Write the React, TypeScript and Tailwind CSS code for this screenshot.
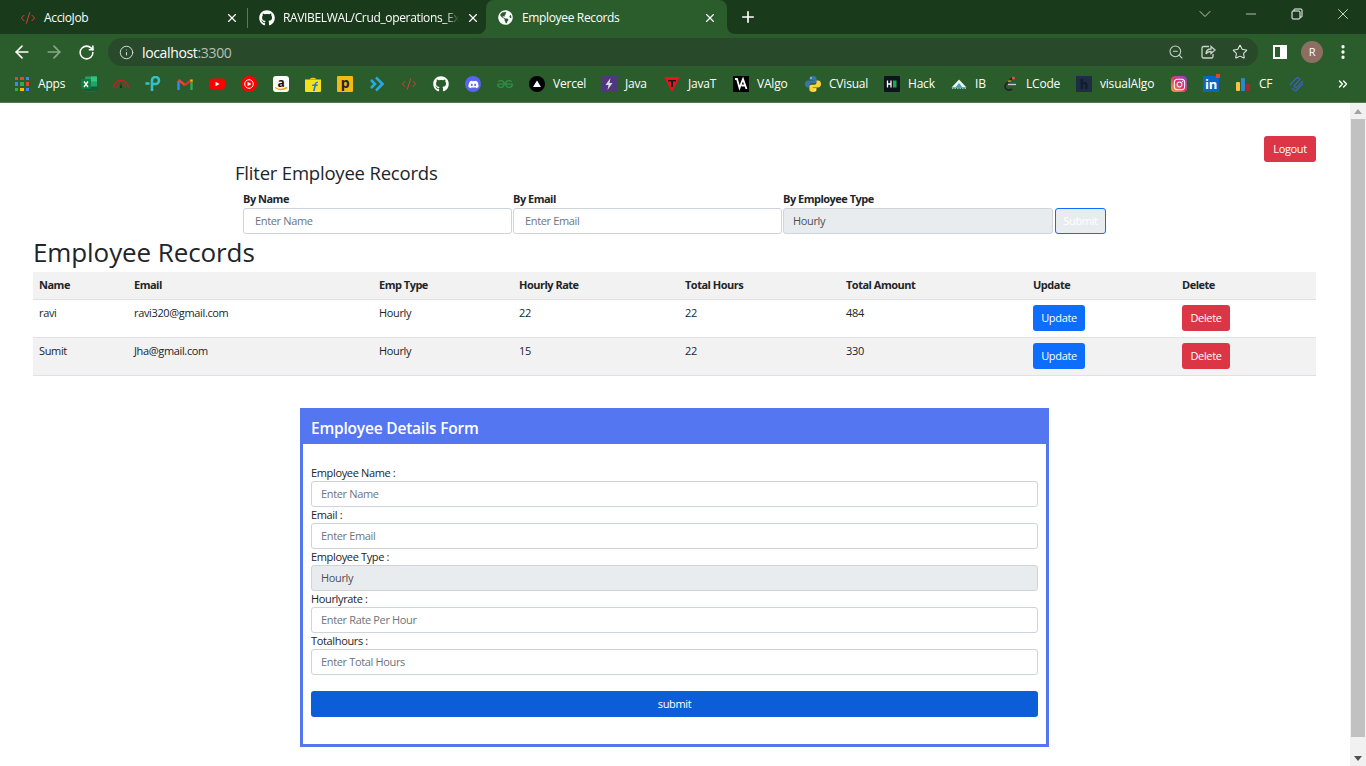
import React from "react";
import {
  ArrowLeft,
  ArrowRight,
  ChevronDown,
  ChevronsRight,
  CodeXml,
  EllipsisVertical,
  Info,
  Minus,
  Plus,
  RotateCw,
  Star,
  X,
  ZoomOut,
} from "lucide-react";
import { FaGithub, FaDiscord, FaGlobeAmericas, FaInstagram } from "react-icons/fa";
import { SiGeeksforgeeks } from "react-icons/si";

const Excel = () => (
  <svg viewBox="0 0 16 16" className="w-4 h-4">
    <rect x="4" y="0.500" width="12" height="15" rx="1" fill="#21a366" />
    <rect x="10" y="0.500" width="6" height="5" fill="#33c481" />
    <rect x="4" y="10.500" width="12" height="5" fill="#185c37" />
    <rect x="0" y="3" width="10" height="10" rx="1" fill="#107c41" />
    <path d="M3 5.500l4 5.500M7 5.500l-4 5.500" stroke="#fff" strokeWidth="1.300" />
  </svg>
);

const Gauge = () => (
  <svg viewBox="0 0 16 16" className="w-4 h-4" fill="none">
    <path d="M0.500 12a7.500 7.500 0 0 1 15 0" stroke="#c81e24" strokeWidth="1.300" />
    <path d="M3.500 12a4.500 4.500 0 0 1 9 0" stroke="#c81e24" strokeWidth="1.100" />
    <path d="M8 6l.9 6H7.100z" fill="#222" />
  </svg>
);

const TpLink = () => (
  <svg viewBox="0 0 16 16" className="w-4 h-4" fill="none" stroke="#35c0c8" strokeWidth="2.600">
    <path d="M7 15V4.500a3.500 3.500 0 1 1 3.500 3.500H8" />
    <path d="M0.500 7.500h4" />
  </svg>
);

const Gmail = () => (
  <svg viewBox="0 0 16 16" className="w-4 h-4" fill="none" strokeWidth="2.400">
    <path d="M1.500 14V5" stroke="#4285f4" />
    <path d="M14.500 14V5" stroke="#34a853" />
    <path d="M1.500 4l6.500 5" stroke="#ea4335" />
    <path d="M14.500 4L8 9" stroke="#d9342b" />
    <path d="M14.500 3.500v2" stroke="#fbbc05" />
  </svg>
);

const Youtube = () => (
  <svg viewBox="0 0 16 16" className="w-4 h-4">
    <rect y="2.500" width="16" height="11" rx="3" fill="#f00" />
    <path d="M6.500 5.700L10.500 8l-4 2.300z" fill="#fff" />
  </svg>
);

const YtMusic = () => (
  <svg viewBox="0 0 16 16" className="w-4 h-4">
    <circle cx="8" cy="8" r="8" fill="#f00" />
    <circle cx="8" cy="8" r="4.300" fill="none" stroke="#fff" strokeWidth="1" />
    <path d="M6.500 5.800L10.500 8l-4 2.200z" fill="#fff" />
  </svg>
);

const AmazonIcon = () => (
  <span className="relative w-4 h-4 bg-white rounded-[3px] flex justify-center text-[#111] text-[12px] font-bold leading-[13px]">
    a
    <svg viewBox="0 0 16 16" className="absolute inset-0 w-4 h-4" fill="none">
      <path d="M2 11.500c3.500 2.500 8 2.500 12 0" stroke="#f90" strokeWidth="1.500" />
    </svg>
  </span>
);

const Flipkart = () => (
  <svg viewBox="0 0 16 16" className="w-4 h-4">
    <path d="M0 3.500h16V15a1 1 0 0 1-1 1H1a1 1 0 0 1-1-1z" fill="#f7e21a" />
    <path d="M4.500 3.500C5 1 11 1 11.500 3.500z" fill="#f2c811" />
    <path d="M8 15l1.200-5H7l.4-1.500h2.100c.4-2 1.500-3 3.500-2.700L12.800 7c-1-.1-1.500.3-1.700 1.500h1.700L12.500 10h-1.700l-1 5z" fill="#2874f0" />
  </svg>
);

const PIcon = () => (
  <span className="w-4 h-4 bg-[#f5b914] rounded-[1px] flex items-center justify-center text-[#222] text-[14px] font-bold leading-none pb-[2px]">
    p
  </span>
);

const BlueArrow = () => (
  <svg viewBox="0 0 16 16" className="w-4 h-4" fill="none" stroke="#29a9e1" strokeWidth="2.600">
    <path d="M2 4l4 4-4 4" />
    <path d="M7 1.500l6.500 6.500-6.500 6.500" />
  </svg>
);

const Vercel = () => (
  <svg viewBox="0 0 16 16" className="w-4 h-4">
    <circle cx="8" cy="8" r="8" fill="#000" />
    <path d="M8 4.500l4 6.500H4z" fill="#fff" />
  </svg>
);

const JavaIcon = () => (
  <svg viewBox="0 0 16 16" className="w-4 h-4">
    <rect width="16" height="16" fill="#51377f" />
    <path d="M9.500 2L4.500 9h3L6.500 14l5-7h-3z" fill="#ddd" />
  </svg>
);

const TIcon = () => (
  <svg viewBox="0 0 16 16" className="w-4 h-4">
    <path d="M0 1h16L8 16z" fill="#e8141c" />
    <path d="M4 4h8v1.600H9V11H7V5.600H4z" fill="#1a1a1a" />
  </svg>
);

const VaIcon = () => (
  <svg viewBox="0 0 16 16" className="w-4 h-4">
    <rect width="16" height="16" fill="#000" />
    <path d="M2 3h2l2.500 9L10 3l3.500 10M8.500 9.500h4" stroke="#fff" strokeWidth="1.800" fill="none" />
  </svg>
);

const Python = () => (
  <svg viewBox="0 0 16 16" className="w-4 h-4">
    <path d="M8 0C5 0 4.500 1.200 4.500 2.500V4H8.200v.600H3C1.200 4.600 0 5.800 0 8s1.200 3.500 2.800 3.500H4.500V9.600C4.500 8.300 5.500 7.300 6.800 7.300h3c1 0 1.800-.9 1.800-1.900V2.500C11.600 1 10.300 0 8 0z" fill="#3776ab" />
    <path d="M8 16c3 0 3.500-1.200 3.500-2.500V12H7.800v-.600H13c1.800 0 3-1.200 3-3.400s-1.200-3.500-2.800-3.500h-1.700v1.900c0 1.300-1 2.300-2.300 2.300h-3c-1 0-1.800.9-1.800 1.900v2.900C4.400 15 5.700 16 8 16z" fill="#ffd43b" />
    <circle cx="6" cy="2" r=".7" fill="#fff" />
    <circle cx="10" cy="14" r=".7" fill="#fff" />
  </svg>
);

const HackIcon = () => (
  <svg viewBox="0 0 16 16" className="w-4 h-4">
    <rect width="16" height="16" rx="1" fill="#0e141e" />
    <path d="M3.500 4.500v7M7 4.500v7M3.500 8H7" stroke="#fff" strokeWidth="1.300" />
    <rect x="9" y="4.500" width="3.500" height="7" fill="#1ba94c" />
  </svg>
);

const IbIcon = () => (
  <svg viewBox="0 0 16 16" className="w-4 h-4">
    <path d="M8 3.500l7.500 8H.5z" fill="#eef4f4" />
    <path d="M8 7l3.500 4.500h-7z" fill="#3f9fb5" />
    <path d="M1 12.500h14" stroke="#79c4d4" strokeWidth="1" strokeDasharray="1.500 1" />
  </svg>
);

const LeetIcon = () => (
  <svg viewBox="0 0 16 16" className="w-4 h-4" fill="none">
    <path d="M10 2L4 8c-1.500 1.600-1 3.600 0 4.700 1.600 1.700 4 1.700 6 .3" stroke="#222" strokeWidth="1.600" />
    <path d="M6 8.500h8" stroke="#ccc" strokeWidth="1.300" />
    <path d="M9 5.500c-1-.8-2-.8-3 0" stroke="#f89f1b" strokeWidth="1.300" />
    <circle cx="11.500" cy="2" r="1.500" fill="#e8523f" />
  </svg>
);

const HIcon = () => (
  <span className="w-4 h-4 bg-[#1e2d44] rounded-[1px] flex items-center justify-center text-[#0f1a2c] text-[13px] font-bold leading-none">
    h
  </span>
);

const Insta = () => (
  <span className="w-4 h-4 rounded-[4px] bg-gradient-to-tr from-[#f9a02e] via-[#e1306c] to-[#7b3fc4] flex items-center justify-center">
    <FaInstagram className="w-[13px] h-[13px] text-white" />
  </span>
);

const Linked = () => (
  <span className="relative w-4 h-4 bg-[#0a66c2] flex items-center justify-center text-white text-[13px] font-bold leading-none">
    in
    <span className="absolute -right-[1px] -top-[2px] w-[4px] h-[4px] bg-[#e2403a]" />
  </span>
);

const CfIcon = () => (
  <svg viewBox="0 0 16 16" className="w-4 h-4">
    <rect x="1" y="6" width="4" height="9" rx="1" fill="#f4c542" />
    <rect x="6" y="2" width="4" height="13" rx="1" fill="#2d88c9" />
    <rect x="11" y="8" width="4" height="7" rx="1" fill="#b8202a" />
  </svg>
);

const Wave = () => (
  <svg viewBox="0 0 16 16" className="w-4 h-4" fill="none" stroke="#3c62ad" strokeWidth="1.300">
    <path d="M1 9l6-6.500c1-1 2-1 3 0l1 1-6 6.500 2 2 7-7" />
    <path d="M3 12l2 2c1 1 2 1 3 0l6-6.500" />
  </svg>
);

const AppsGrid = () => {
  const dots = ["#ea4335", "#ea4335", "#4285f4", "#4285f4", "#34a853", "#ea4335", "#34a853", "#fbbc05", "#4285f4"];
  return (
    <span className="w-4 h-4 grid grid-cols-3 gap-[2px] p-[1px]">
      {dots.map((c, i) => (
        <span key={i} className="block" style={{ background: c }} />
      ))}
    </span>
  );
};

type Mark = { icon: React.ReactNode; label?: string; w?: string };

const marks: Mark[] = [
  { icon: <AppsGrid />, label: "Apps", w: "w-[27px]" },
  { icon: <Excel /> },
  { icon: <Gauge /> },
  { icon: <TpLink /> },
  { icon: <Gmail /> },
  { icon: <Youtube /> },
  { icon: <YtMusic /> },
  { icon: <AmazonIcon /> },
  { icon: <Flipkart /> },
  { icon: <PIcon /> },
  { icon: <BlueArrow /> },
  { icon: <CodeXml className="w-4 h-4 text-[#d6403a]" strokeWidth={1.5} /> },
  { icon: <FaGithub className="w-4 h-4 text-white" /> },
  { icon: <span className="w-4 h-4 rounded-full bg-[#5865f2] flex items-center justify-center"><FaDiscord className="w-[11px] h-[11px] text-white" /></span> },
  { icon: <SiGeeksforgeeks className="w-4 h-4 text-[#2f8d46]" /> },
  { icon: <Vercel />, label: "Vercel", w: "w-[32px]" },
  { icon: <JavaIcon />, label: "Java", w: "w-[23px]" },
  { icon: <TIcon />, label: "JavaT", w: "w-[29px]" },
  { icon: <VaIcon />, label: "VAlgo", w: "w-[32px]" },
  { icon: <Python />, label: "CVisual", w: "w-[39px]" },
  { icon: <HackIcon />, label: "Hack", w: "w-[27px]" },
  { icon: <IbIcon />, label: "IB", w: "w-[11px]" },
  { icon: <LeetIcon />, label: "LCode", w: "w-[34px]" },
  { icon: <HIcon />, label: "visualAlgo", w: "w-[55px]" },
  { icon: <Insta /> },
  { icon: <Linked /> },
  { icon: <CfIcon />, label: "CF", w: "w-[14px]" },
  { icon: <Wave /> },
];

const TabStrip = () => (
  <div className="h-[34px] flex bg-[#2a5c2c] text-white text-[12px]">
    <div className="w-[486px] bg-[#1a3b1b] rounded-br-lg flex items-center pt-[1px]">
      <div className="w-[247px] flex items-center pl-[20px] pr-[8px]">
        <CodeXml className="w-4 h-4 text-[#d6403a] shrink-0" strokeWidth={1.5} />
        <span className="ml-[8px] flex-1">AccioJob</span>
        <X className="w-[14px] h-[14px]" strokeWidth={2} />
      </div>
      <div className="w-px h-[20px] bg-[#5a7a5a]" />
      <div className="flex-1 min-w-0 flex items-center pl-[11px] pr-[9px]">
        <FaGithub className="w-4 h-4 shrink-0" />
        <span className="ml-[8px] flex-1 whitespace-nowrap [mask-image:linear-gradient(to_right,black_92%,transparent)]">
          RAVIBELWAL/Crud_operations_Ex
        </span>
        <X className="w-[14px] h-[14px] ml-[7px] shrink-0" strokeWidth={2} />
      </div>
    </div>
    <div className="w-[241px] bg-[#1a3b1b]">
      <div className="h-full bg-[#2a5c2c] rounded-t-lg flex items-center pl-[12px] pr-[10px] pt-[1px]">
        <FaGlobeAmericas className="w-[15px] h-[15px] shrink-0" />
        <span className="ml-[9px] flex-1">Employee Records</span>
        <X className="w-[14px] h-[14px]" strokeWidth={2} />
      </div>
    </div>
    <div className="flex-1 bg-[#1a3b1b] rounded-bl-lg flex items-center">
      <Plus className="w-[18px] h-[18px] ml-[12px]" strokeWidth={2.2} />
      <div className="flex-1" />
      <div className="flex items-center pb-[6px]">
        <span className="w-[46px] flex justify-center"><ChevronDown className="w-[20px] h-[20px] text-[#dde4dd]" strokeWidth={1} /></span>
        <span className="w-[46px] flex justify-center"><Minus className="w-[16px] h-[16px]" strokeWidth={1} /></span>
        <span className="w-[46px] flex justify-center">
          <svg viewBox="0 0 12 12" className="w-3 h-3" fill="none" stroke="#fff" strokeWidth="1">
            <rect x="1" y="3" width="8" height="8" rx="1" />
            <path d="M3 3V1.500A.5.5 0 0 1 3.500 1H10a1 1 0 0 1 1 1v6.500a.5.5 0 0 1-.5.5H9" />
          </svg>
        </span>
        <span className="w-[46px] flex justify-center"><X className="w-[18px] h-[18px]" strokeWidth={1} /></span>
      </div>
    </div>
  </div>
);

const Toolbar = () => (
  <div className="h-[36px] bg-[#2a5c2c] flex items-center text-white">
    <ArrowLeft className="w-5 h-5 ml-[12px]" strokeWidth={2} />
    <ArrowRight className="w-5 h-5 ml-[12px] text-[#8aa68b]" strokeWidth={2} />
    <RotateCw className="w-[17px] h-[17px] ml-[14px]" strokeWidth={2.2} />
    <div className="ml-[13px] w-[1150px] h-[28px] rounded-full bg-[#29492b] flex items-center pl-[11px] pr-[10px]">
      <Info className="w-[15px] h-[15px] text-[#d5ddd5]" strokeWidth={1.6} />
      <span className="ml-[8px] text-[14px] text-white">localhost<span className="text-[#b4c2b4]">:3300</span></span>
      <div className="flex-1" />
      <ZoomOut className="w-[16px] h-[16px] text-[#c9d3c9]" strokeWidth={1.6} />
      <svg viewBox="0 0 16 16" className="w-4 h-4 ml-[16px]" fill="none" stroke="#c9d3c9" strokeWidth="1.300">
        <path d="M9 2.500H3.500a1.500 1.500 0 0 0-1.500 1.500v8.500A1.500 1.500 0 0 0 3.500 14h8a1.500 1.500 0 0 0 1.500-1.500V10" />
        <path d="M6 10c0-3 2-5 5-5V2.500L15 6l-4 3.500V7.500c-2 0-4 .6-5 2.500z" />
      </svg>
      <Star className="w-[16px] h-[16px] ml-[16px] text-[#dfe6df]" strokeWidth={1.6} />
    </div>
    <span className="ml-[15px] w-[14px] h-[14px] border-2 border-white flex justify-end">
      <span className="w-[5px] bg-white" />
    </span>
    <span className="ml-[14px] w-[22px] h-[22px] rounded-full bg-[#8d6e63] flex items-center justify-center text-[11px] text-white">R</span>
    <EllipsisVertical className="w-[18px] h-[18px] ml-[11px]" strokeWidth={2.4} />
  </div>
);

const Bookmarks = () => (
  <div className="h-[33px] bg-[#2a5c2c] border-b border-[#4f7a50] flex items-center pl-[6px] pb-[4px] text-white text-[12px] tracking-[-0.2px]">
    {marks.map((m, i) => (
      <div key={i} className="flex items-center px-2 shrink-0">
        {m.icon}
        {m.label && <span className={`ml-2 whitespace-nowrap ${m.w}`}>{m.label}</span>}
      </div>
    ))}
    <div className="flex-1" />
    <ChevronsRight className="w-[14px] h-[14px] mr-[16px]" strokeWidth={2.4} />
  </div>
);

const Scrollbar = () => (
  <div className="w-4 shrink-0 bg-[#f1f1f1] flex flex-col items-center">
    <div className="h-4 flex items-center justify-center">
      <span className="border-x-[4px] border-x-transparent border-b-[5px] border-b-[#a3a3a3]" />
    </div>
    <div className="w-[14px] h-[618px] bg-[#c1c1c1]" />
    <div className="flex-1" />
    <div className="h-4 flex items-center justify-center">
      <span className="border-x-[4px] border-x-transparent border-t-[5px] border-t-[#505050]" />
    </div>
  </div>
);

const inputCls =
  "block h-[26px] w-full px-[9px] border border-[#ced4da] rounded-[3px] bg-white text-[11px] text-[#212529] placeholder:text-[#6c757d] outline-none";

const FilterField = ({ label, placeholder, w }: { label: string; placeholder: string; w: string }) => (
  <div className={`flex flex-col ${w}`}>
    <label className="h-[17px] text-[11px] font-bold tracking-[-0.5px] text-[#212529] leading-[15px]">{label}</label>
    <input className={`${inputCls} px-[11px] pb-[2px]`} placeholder={placeholder} />
  </div>
);

const Filter = () => (
  <div className="ml-[235px]">
    <h3 className="h-[23px] text-[18.5px] tracking-[-0.2px] font-medium text-[#212529] leading-[21px]">Fliter Employee Records</h3>
    <div className="mt-[6px] ml-[8px] flex items-end">
      <FilterField label="By Name" placeholder="Enter Name" w="w-[269px] mr-[1px]" />
      <FilterField label="By Email" placeholder="Enter Email" w="w-[269px] mr-[1px]" />
      <div className="flex flex-col w-[270px] mr-[2px]">
        <label className="h-[17px] text-[11px] font-bold tracking-[-0.5px] text-[#212529] leading-[15px]">By Employee Type</label>
        <div className="h-[26px] px-[9px] flex items-center border border-[#ced4da] rounded-[3px] bg-[#e9ecef] text-[11px] text-[#495057]">Hourly</div>
      </div>
      <button className="h-[26px] w-[51px] border border-[#0d6efd] rounded-[3px] bg-[#e9ecef] text-white text-[11px]">Submit</button>
    </div>
  </div>
);

const rows = [
  { name: "ravi", email: "ravi320@gmail.com", type: "Hourly", rate: "22", hours: "22", amount: "484", alt: false },
  { name: "Sumit", email: "Jha@gmail.com", type: "Hourly", rate: "15", hours: "22", amount: "330", alt: true },
];

const Records = () => (
  <div className="ml-[33px] mr-[34px]">
    <h2 className="mt-[2px] h-[36px] text-[26px] tracking-[-0.1px] font-medium text-[#212529] leading-[32px]">Employee Records</h2>
    <table className="w-full table-fixed border-collapse text-[11px] text-[#212529]">
      <colgroup>
        <col className="w-[95px]" />
        <col className="w-[245px]" />
        <col className="w-[140px]" />
        <col className="w-[166px]" />
        <col className="w-[161px]" />
        <col className="w-[187px]" />
        <col className="w-[149px]" />
        <col />
      </colgroup>
      <thead>
        <tr className="h-[27px] bg-[#f2f2f2] border-b border-[#dee2e6] text-left">
          {["Name", "Email", "Emp Type", "Hourly Rate", "Total Hours", "Total Amount", "Update", "Delete"].map((h) => (
            <th key={h} className="font-bold tracking-[-0.5px] pl-[6px]">{h}</th>
          ))}
        </tr>
      </thead>
      <tbody>
        {rows.map((r) => (
          <tr key={r.name} className={`h-[38px] border-b border-[#dee2e6] ${r.alt ? "bg-[#f2f2f2]" : "bg-white"}`}>
            {[r.name, r.email, r.type, r.rate, r.hours, r.amount].map((c, i) => (
              <td key={i} className="pl-[6px] pt-[5px] align-top leading-[15px]">{c}</td>
            ))}
            <td className="align-top pt-[5px] pl-[6px]">
              <button className="block h-[26px] w-[52px] pt-[2px] rounded-[3px] bg-[#0d6efd] text-white text-[11px]">Update</button>
            </td>
            <td className="align-top pt-[5px] pl-[6px]">
              <button className="block h-[26px] w-[48px] pt-[2px] rounded-[3px] bg-[#dc3545] text-white text-[11px]">Delete</button>
            </td>
          </tr>
        ))}
      </tbody>
    </table>
  </div>
);

const formFields = [
  { label: "Employee Name :", placeholder: "Enter Name" },
  { label: "Email :", placeholder: "Enter Email" },
  { label: "Employee Type :", value: "Hourly" },
  { label: "Hourlyrate :", placeholder: "Enter Rate Per Hour" },
  { label: "Totalhours :", placeholder: "Enter Total Hours" },
];

const DetailsForm = () => (
  <div className="mt-[32px] ml-[300px] w-[749px] h-[339px] border-[3px] border-[#5476f1]">
    <div className="h-[33px] bg-[#5476f1] pl-[8px] pt-[3px] flex items-center text-white text-[15.5px] tracking-[-0.2px] font-semibold">
      Employee Details Form
    </div>
    <div className="px-[8px] pt-[21px]">
      {formFields.map((f) => (
        <div key={f.label}>
          <label className="block h-[16px] text-[11px] leading-[16px] text-[#212529]">{f.label}</label>
          {f.value ? (
            <div className="h-[26px] px-[9px] pt-[2px] flex items-center border border-[#ced4da] rounded-[3px] bg-[#e9ecef] text-[11px] text-[#495057]">{f.value}</div>
          ) : (
            <input className={inputCls} placeholder={f.placeholder} />
          )}
        </div>
      ))}
      <button className="block mt-[16px] h-[26px] w-full pt-[2px] rounded-[3px] bg-[#0b5ed7] text-white text-[11px]">submit</button>
    </div>
  </div>
);

export default function App() {
  return (
    <div className="w-[1366px] h-[766px] overflow-hidden flex flex-col bg-white font-['Open_Sans',sans-serif] tracking-[-0.35px]">
      <TabStrip />
      <Toolbar />
      <Bookmarks />
      <div className="flex-1 min-h-0 flex">
        <div className="flex-1 min-w-0">
          <div className="pt-[33px] flex justify-end pr-[34px]">
            <button className="block h-[26px] w-[52px] rounded-[3px] bg-[#dc3545] text-white text-[11px]">Logout</button>
          </div>
          <Filter />
          <Records />
          <DetailsForm />
        </div>
        <Scrollbar />
      </div>
    </div>
  );
}
